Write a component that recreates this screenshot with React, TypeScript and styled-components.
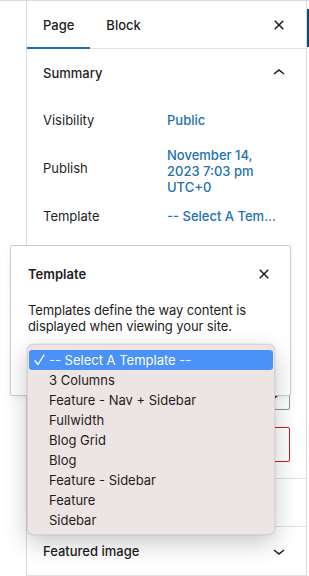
import React from 'react'
import styled, { createGlobalStyle } from 'styled-components'

const GlobalStyle = createGlobalStyle`
  html, body {
    margin: 0;
    padding: 0;
    background: #fff;
  }
  body {
    font-family: Inter, 'Liberation Sans', sans-serif;
    color: #1e1e1e;
    -webkit-font-smoothing: antialiased;
  }
`

const Frame = styled.div`
  display: flex;
  height: 576px;
  border-top: 1px solid #dcdcde;
  box-sizing: border-box;
  position: relative;
  overflow: hidden;
`

const Gutter = styled.div`
  width: 26px;
  border-right: 1px solid #dcdcde;
`

const Sidebar = styled.aside`
  width: 279px;
  border-right: 1px solid #dcdcde;
  display: flex;
  flex-direction: column;
  font-size: 13px;
`

const Edge = styled.div`
  width: 2px;
  display: flex;
  flex-direction: column;
`

const EdgeBar = styled.div`
  margin-top: 8px;
  height: 38px;
  background: #0b4b74;
`

const Tabs = styled.div`
  display: flex;
  align-items: center;
  height: 47px;
  border-bottom: 1px solid #e0e0e0;
  padding-right: 15px;
`

const Tab = styled.div<{ $active?: boolean }>`
  position: relative;
  height: 100%;
  display: flex;
  align-items: center;
  padding: 0 16px;
  font-weight: 500;

  &::after {
    content: '';
    display: ${({ $active }) => ($active ? 'block' : 'none')};
    position: absolute;
    left: 0;
    right: 0;
    bottom: -1px;
    height: 2px;
    background: #1d72b3;
  }
`

const IconButton = styled.span`
  margin-left: auto;
  width: 24px;
  height: 24px;
  display: flex;
  align-items: center;
  justify-content: center;
  color: #1e1e1e;
`

const Panel = styled.section`
  border-bottom: 1px solid #e0e0e0;
`

const PanelHeader = styled.div<{ $height?: number }>`
  height: ${({ $height }) => $height ?? 48}px;
  display: flex;
  align-items: center;
  padding: 0 15px 0 16px;
  font-weight: 500;
`

const PanelBody = styled.div`
  padding: 5px 16px 16px;
`

const Row = styled.div<{ $height?: number }>`
  display: flex;
  align-items: center;
  min-height: ${({ $height }) => $height ?? 36}px;
`

const Label = styled.div`
  width: 124px;
  flex-shrink: 0;
`

const Value = styled.div<{ $top?: boolean }>`
  color: #2271b1;
  font-weight: 500;
  line-height: 16px;
  white-space: nowrap;
  ${({ $top }) => ($top ? 'align-self: flex-start; margin-top: 9px;' : '')}
`

const Field = styled.div`
  margin-top: 136px;
  height: 40px;
  border: 1px solid #8c8f94;
  border-radius: 2px;
  box-sizing: border-box;
  display: flex;
  align-items: center;
  padding: 11px 4px 0 8px;
`

const TrashButton = styled.div`
  margin-top: 17px;
  height: 35px;
  border: 1px solid #d21c1c;
  border-radius: 2px;
  box-sizing: border-box;
`

const Popover = styled.div`
  position: absolute;
  left: 10px;
  top: 244px;
  width: 281px;
  height: 151px;
  box-sizing: border-box;
  background: #fff;
  border: 1px solid #ccc;
  border-radius: 2px;
  box-shadow: 0 2px 6px rgba(0, 0, 0, 0.06);
  padding: 16px 14px 0 17px;
  font-size: 13px;
`

const PopoverHead = styled.div`
  display: flex;
  align-items: center;
  height: 24px;
  font-weight: 600;
`

const PopoverText = styled.p`
  margin: 16px 0 0;
  line-height: 16px;
  letter-spacing: -0.1px;
`

const Menu = styled.ul`
  position: absolute;
  left: 27px;
  top: 343px;
  width: 248px;
  height: 191px;
  box-sizing: border-box;
  margin: 0;
  padding: 5px 1px 5px;
  list-style: none;
  background: #ede4e4;
  border-radius: 6px;
  border: 1px solid rgba(0, 0, 0, 0.08);
  box-shadow: 0 8px 24px rgba(0, 0, 0, 0.22), 0 0 2px rgba(0, 0, 0, 0.15);
  font-size: 13px;
`

const MenuItem = styled.li<{ $selected?: boolean }>`
  display: flex;
  align-items: center;
  height: 20px;
  padding-left: 5px;
  border-radius: 3px;
  color: ${({ $selected }) => ($selected ? '#fff' : '#1e1e1e')};
  background: ${({ $selected }) => ($selected ? '#4a92f7' : 'transparent')};
`

const Check = styled.span`
  width: 15px;
  display: flex;
  align-items: center;
`

const CloseIcon = ({ size = 24 }: { size?: number }) => (
  <svg width={size} height={size} viewBox="0 0 24 24" fill="currentColor">
    <path d="M12 13.06l3.712 3.713 1.061-1.06L13.061 12l3.712-3.712-1.06-1.06L12 10.938 8.288 7.227l-1.061 1.06L10.939 12l-3.712 3.712 1.06 1.061L12 13.061z" />
  </svg>
)

const ChevronUp = () => (
  <svg width="24" height="24" viewBox="0 0 24 24" fill="currentColor">
    <path d="M6.5 12.4L12 8l5.5 4.4-.9 1.2L12 10l-4.6 3.6-.9-1.2z" />
  </svg>
)

const ChevronDown = () => (
  <svg width="24" height="24" viewBox="0 0 24 24" fill="currentColor">
    <path d="M17.5 11.6L12 16l-5.5-4.4.9-1.2L12 14l4.6-3.6.9 1.2z" />
  </svg>
)

const CheckMark = () => (
  <svg width="11" height="12" viewBox="0 0 11 12" fill="none">
    <path
      d="M1 6.8L4 10.5L10 1"
      stroke="currentColor"
      strokeWidth="1.4"
      strokeLinecap="round"
      strokeLinejoin="round"
    />
  </svg>
)

const templates = [
  '-- Select A Template --',
  '3 Columns',
  'Feature - Nav + Sidebar',
  'Fullwidth',
  'Blog Grid',
  'Blog',
  'Feature - Sidebar',
  'Feature',
  'Sidebar',
]

export default function App() {
  return (
    <>
      <GlobalStyle />
      <Frame>
        <Gutter />
        <Sidebar>
          <Tabs>
            <Tab $active>Page</Tab>
            <Tab>Block</Tab>
            <IconButton>
              <CloseIcon />
            </IconButton>
          </Tabs>

          <Panel>
            <PanelHeader>
              Summary
              <IconButton>
                <ChevronUp />
              </IconButton>
            </PanelHeader>
            <PanelBody>
              <Row>
                <Label>Visibility</Label>
                <Value>Public</Value>
              </Row>
              <Row $height={60}>
                <Label>Publish</Label>
                <Value $top>
                  November 14,
                  <br />
                  2023 7:03 pm
                  <br />
                  UTC+0
                </Value>
              </Row>
              <Row>
                <Label>Template</Label>
                <Value>-- Select A Tem...</Value>
              </Row>
              <Field>
                <IconButton>
                  <ChevronDown />
                </IconButton>
              </Field>
              <TrashButton />
            </PanelBody>
          </Panel>

          <Panel>
            <PanelHeader $height={47} />
          </Panel>

          <Panel>
            <PanelHeader>
              Featured image
              <IconButton>
                <ChevronDown />
              </IconButton>
            </PanelHeader>
          </Panel>
        </Sidebar>
        <Edge>
          <EdgeBar />
        </Edge>

        <Popover>
          <PopoverHead>
            Template
            <IconButton>
              <CloseIcon />
            </IconButton>
          </PopoverHead>
          <PopoverText>
            Templates define the way content is displayed when viewing your
            site.
          </PopoverText>
        </Popover>

        <Menu>
          {templates.map((t, i) => (
            <MenuItem key={t} $selected={i === 0}>
              <Check>{i === 0 ? <CheckMark /> : null}</Check>
              {t}
            </MenuItem>
          ))}
        </Menu>
      </Frame>
    </>
  )
}
